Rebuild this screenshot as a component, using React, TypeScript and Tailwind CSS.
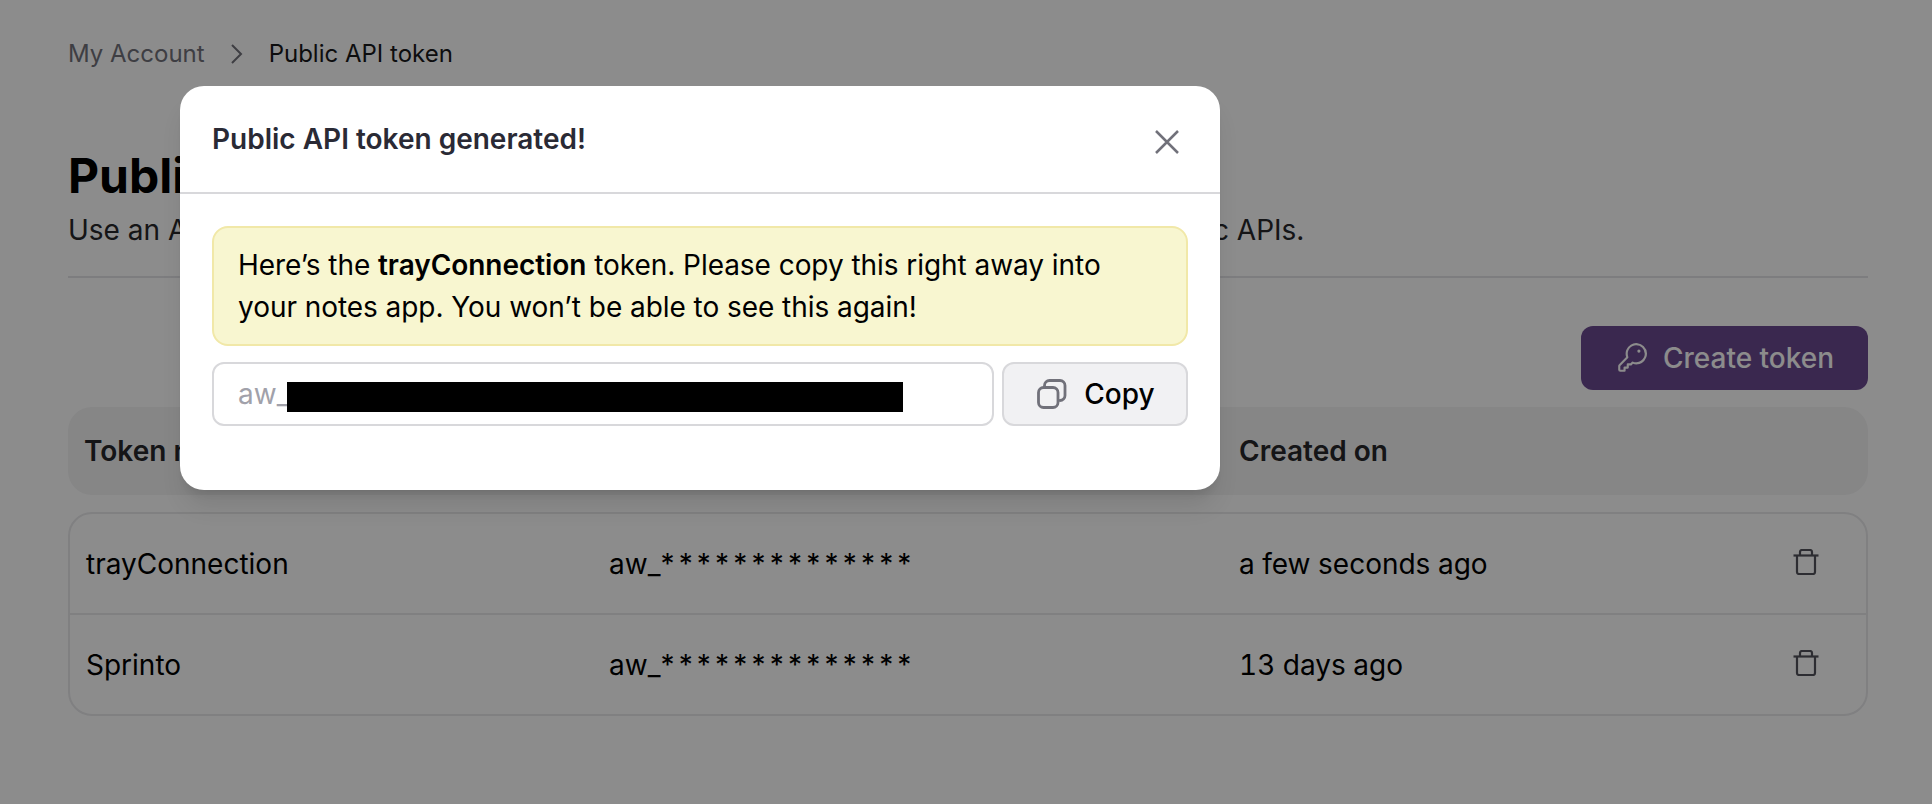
import { PiKey } from "react-icons/pi";

const font = { fontFamily: "Inter, 'Liberation Sans', sans-serif" };

function Copy() {
  return (
    <svg width="30" height="30" viewBox="0 0 30 30" fill="none" stroke="currentColor" strokeWidth="2.800" strokeLinecap="round" strokeLinejoin="round">
      <rect x="1.500" y="8.500" width="19.500" height="20" rx="5" />
      <path d="M7.500 8V6.500a5 5 0 0 1 5-5h10.500a5 5 0 0 1 5 5v10a5 5 0 0 1-5 5" />
    </svg>
  );
}
function Trash() {
  return (
    <svg width="26" height="26" viewBox="0 0 26 26" fill="none" stroke="currentColor" strokeWidth="2.200" strokeLinejoin="round">
      <path d="M0.500 6.500h25" />
      <path d="M7 6.500V3a2 2 0 0 1 2-2h8a2 2 0 0 1 2 2v3.500" />
      <path d="M4 6.500V23a2 2 0 0 0 2 2h14a2 2 0 0 0 2-2V6.500" />
    </svg>
  );
}

function Row({ name, age, last }: { name: string; age: string; last?: boolean }) {
  return (
    <div className={last ? "grid h-[99px] grid-cols-[523px_630px_1fr_73px] items-center pl-[16px] pt-[1px]" : "grid h-[101px] grid-cols-[523px_630px_1fr_73px] items-center border-b-2 border-[#e9e9ec] pl-[16px] pt-[1px]"}>
      <span>{name}</span>
      <span>aw_<span className="tracking-[4.200px]">**************</span></span>
      <span className="tabular-nums">{age}</span>
      <span className="mb-[4px] flex text-[#52525b]"><Trash /></span>
    </div>
  );
}

export default function App() {
  return (
    <div className="relative h-[804px] w-[1932px] overflow-hidden bg-white text-black" style={font}>
      <div className="pl-[68px] pr-[64px] pt-[37px]">
        <nav className="flex h-[34px] items-center text-[24px] leading-[34px]">
          <span className="text-[#71717a]">My Account</span>
          <svg className="mx-[24px] text-[#71717a]" width="16" height="22" viewBox="0 0 16 22" fill="none" stroke="currentColor" strokeWidth="2">
            <path d="M3 2l9 9-9 9" />
          </svg>
          <span className="text-[#18181b]">Public API token</span>
        </nav>
        <h1 className="mt-[75px] text-[48px] font-bold leading-[60px]">Public API token</h1>
        <p className="mt-[6px] whitespace-nowrap text-[28px] leading-[36px] text-[#27272a]">
          Use an API token to authenticate your requests and connect your scripts with our public APIs.
        </p>
        <div className="mt-[28px] h-[2px] bg-[#e4e4e7]" />
        <div className="mt-[48px] flex justify-end">
          <button className="flex h-[64px] w-[287px] items-center justify-center gap-[14px] rounded-[12px] bg-[#6b4991] text-[28px] font-medium text-white">
            <PiKey size={34} />
            Create token
          </button>
        </div>
        <div className="mt-[17px] grid h-[88px] grid-cols-[524px_631px_1fr] items-center rounded-[24px] bg-[#f4f4f5] pl-[16px] text-[28px] font-semibold text-[#27272a]">
          <span>Token name</span>
          <span>Token</span>
          <span>Created on</span>
        </div>
        <div className="mt-[17px] rounded-[24px] border-2 border-[#e9e9ec] text-[28px]">
          <Row name="trayConnection" age="a few seconds ago" />
          <Row name="Sprinto" age="13 days ago" last />
        </div>
      </div>

      <div className="absolute inset-0 bg-black/45" />

      <div className="absolute left-[180px] top-[86px] h-[404px] w-[1040px] rounded-[24px] bg-white shadow-xl">
        <div className="flex h-[108px] items-center justify-between border-b-2 border-[#d8d8db] pl-[32px] pr-[39px]">
          <h2 className="text-[28px] font-semibold text-[#2a2a35]">Public API token generated!</h2>
          <svg width="28" height="28" viewBox="0 0 28 28" fill="none" stroke="#71717a" strokeWidth="2.500" className="mt-[6px]">
            <path d="M3 3l22 22M25 3L3 25" />
          </svg>
        </div>
        <div className="px-[32px] pt-[32px]">
          <div className="h-[120px] rounded-[16px] border-2 border-[#f1e8a8] bg-[#f8f6d0] px-[24px] py-[16px] text-[28px] leading-[42px] tracking-[-0.050px]">
            Here’s the <strong className="font-semibold">trayConnection</strong> token. Please copy this right away into your notes app. You won’t be able to see this again!
          </div>
          <div className="mt-[16px] flex gap-[8px]">
            <div className="flex h-[64px] flex-1 items-center rounded-[12px] border-2 border-[#d8d8db] px-[24px] text-[28px] text-[#a1a1aa]">
              aw_
              <span className="-ml-[2px] mt-[5px] h-[30px] w-[616px] bg-black" />
            </div>
            <button className="flex h-[64px] w-[186px] items-center justify-center gap-[17px] rounded-[12px] border-2 border-[#d8d8db] bg-[#f1f1f3] pl-[2px] text-[28px] font-medium">
              <span className="flex text-[#71717a]"><Copy /></span>
              Copy
            </button>
          </div>
        </div>
      </div>
    </div>
  );
}
